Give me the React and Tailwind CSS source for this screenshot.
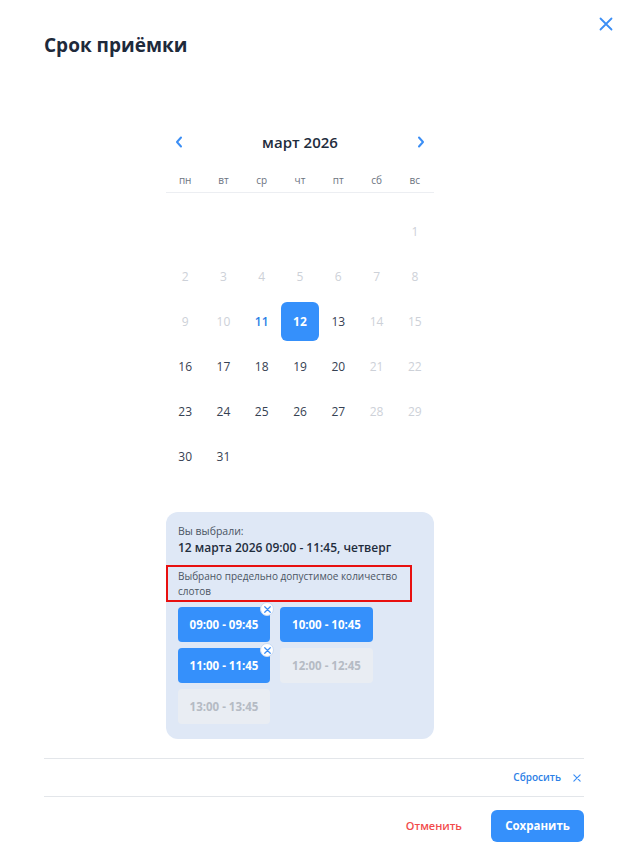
import React from 'react';

const weekDays = ['пн', 'вт', 'ср', 'чт', 'пт', 'сб', 'вс'];

// март 2026 начинается с воскресенья
const cells = [
  ...Array(6).fill(null),
  ...Array.from({ length: 31 }, (_, i) => i + 1),
];

const dayState = (d) => {
  if (d === 12) return 'selected';
  if (d === 11) return 'today';
  if (d <= 10) return 'off';
  const wd = (d + 5) % 7; // 0 = пн
  if (wd >= 5) return 'off';
  return 'on';
};

const slots = [
  { label: '09:00 - 09:45', active: true },
  { label: '10:00 - 10:45', active: true, noBadge: true },
  { label: '11:00 - 11:45', active: true },
  { label: '12:00 - 12:45', active: false },
  { label: '13:00 - 13:45', active: false },
];

const Cross = ({ className, strokeWidth = 2 }) => (
  <svg className={className} viewBox="0 0 14 14" fill="none" stroke="currentColor" strokeWidth={strokeWidth} strokeLinecap="round">
    <path d="M1.5 1.5l11 11M12.5 1.5l-11 11" />
  </svg>
);

const Chevron = ({ dir = 'left' }) => (
  <svg className="w-[8px] h-[12px] text-[#3b8ef5]" viewBox="0 0 8 12" fill="none" stroke="currentColor" strokeWidth="2" strokeLinecap="round" strokeLinejoin="round">
    {dir === 'left' ? <polyline points="6 1.5 2 6 6 10.5" /> : <polyline points="2 1.5 6 6 2 10.5" />}
  </svg>
);

const Calendar = () => (
  <div className="w-[268px] ml-[166px]">
    <div className="flex items-center justify-between h-[24px] px-[9px]">
      <button className="flex items-center justify-center"><Chevron dir="left" /></button>
      <div className="text-[15px] font-semibold text-[#1f2d3d]">март 2026</div>
      <button className="flex items-center justify-center"><Chevron dir="right" /></button>
    </div>
    <div className="grid grid-cols-7 mt-[19px] pb-[5px] border-b border-[#eceef2]">
      {weekDays.map((w) => (
        <div key={w} className="text-center text-[10px] text-[#6b7380] leading-[14px]">{w}</div>
      ))}
    </div>
    <div className="grid grid-cols-7 mt-[16px]">
      {cells.map((d, i) => {
        if (d === null) return <div key={i} className="h-[45px]" />;
        const s = dayState(d);
        return (
          <div key={i} className="h-[45px] flex items-center justify-center">
            <div
              className={
                s === 'selected'
                  ? 'w-[38px] h-[39px] rounded-[6px] bg-[#3590fb] flex items-center justify-center text-[12px] font-bold text-white'
                  : s === 'today'
                  ? 'text-[12px] font-semibold text-[#2c7fe6]'
                  : s === 'off'
                  ? 'text-[12px] text-[#cdd1d8]'
                  : 'text-[12px] text-[#364152]'
              }
            >
              {d}
            </div>
          </div>
        );
      })}
    </div>
  </div>
);

const Slots = () => (
  <div className="ml-[166px] mt-[33px] w-[268px] rounded-[12px] bg-[#dfe8f6] pt-[12px] pb-[15px]">
    <div className="px-[12px] text-[10.5px] text-[#4b5563] leading-[14px]">Вы выбрали:</div>
    <div className="px-[12px] mt-[1px] text-[12px] font-semibold text-[#1f2d3d] leading-[17px]">
      12 марта 2026 09:00 - 11:45, четверг
    </div>
    <div className="mt-[9px] w-[246px] border-2 border-[#e81010] pl-[10px] pr-[4px] pt-[2px] pb-[1px] text-[10px] leading-[15px] text-[#4b5563]">
      Выбрано предельно допустимое количество слотов
    </div>
    <div className="px-[12px] mt-[5px] grid grid-cols-[92px_93px] gap-x-[10px] gap-y-[6px]">
      {slots.map((s) => (
        <div
          key={s.label}
          className={`relative h-[35px] rounded-[4px] flex items-center justify-center text-[11.5px] font-bold ${
            s.active ? 'bg-[#3590fb] text-white' : 'bg-[#e9edf3] text-[#b5bbc4]'
          }`}
        >
          {s.label}
          {s.active && !s.noBadge && (
            <span className="absolute -top-[5px] -right-[4px] w-[14px] h-[14px] rounded-full bg-white border border-[#c9daf3] flex items-center justify-center text-[#3b8ef5]">
              <Cross className="w-[7px] h-[7px]" strokeWidth={2.4} />
            </span>
          )}
        </div>
      ))}
    </div>
  </div>
);

export default function App() {
  return (
    <div className="relative w-[632px] h-[859px] bg-white font-['Open_Sans','Noto_Sans',sans-serif]">
      <button className="absolute top-[17px] right-[19px] text-[#3b8ef5]">
        <Cross className="w-[14px] h-[14px]" strokeWidth={1.8} />
      </button>
      <div className="pt-[32px] px-[44px]">
        <h1 className="text-[19px] font-bold text-[#1e2a3b] leading-[26px]">Срок приёмки</h1>
      </div>
      <div className="mt-[72px]">
        <Calendar />
      </div>
      <Slots />
      <div className="mx-[44px] w-[540px] mt-[19px] border-t border-[#e3e6ea] border-b h-[39px] flex items-center justify-end gap-[12px] pr-[3px]">
        <span className="text-[10px] font-semibold text-[#2c7fe6]">Сбросить</span>
        <Cross className="w-[8px] h-[8px] text-[#3b8ef5]" strokeWidth={2} />
      </div>
      <div className="mx-[44px] w-[540px] mt-[13px] flex items-center justify-end gap-[29px]">
        <span className="text-[11px] font-semibold text-[#f24b4b]">Отменить</span>
        <button className="w-[93px] h-[32px] rounded-[6px] bg-[#3590fb] text-white text-[11.5px] font-bold">Сохранить</button>
      </div>
    </div>
  );
}
